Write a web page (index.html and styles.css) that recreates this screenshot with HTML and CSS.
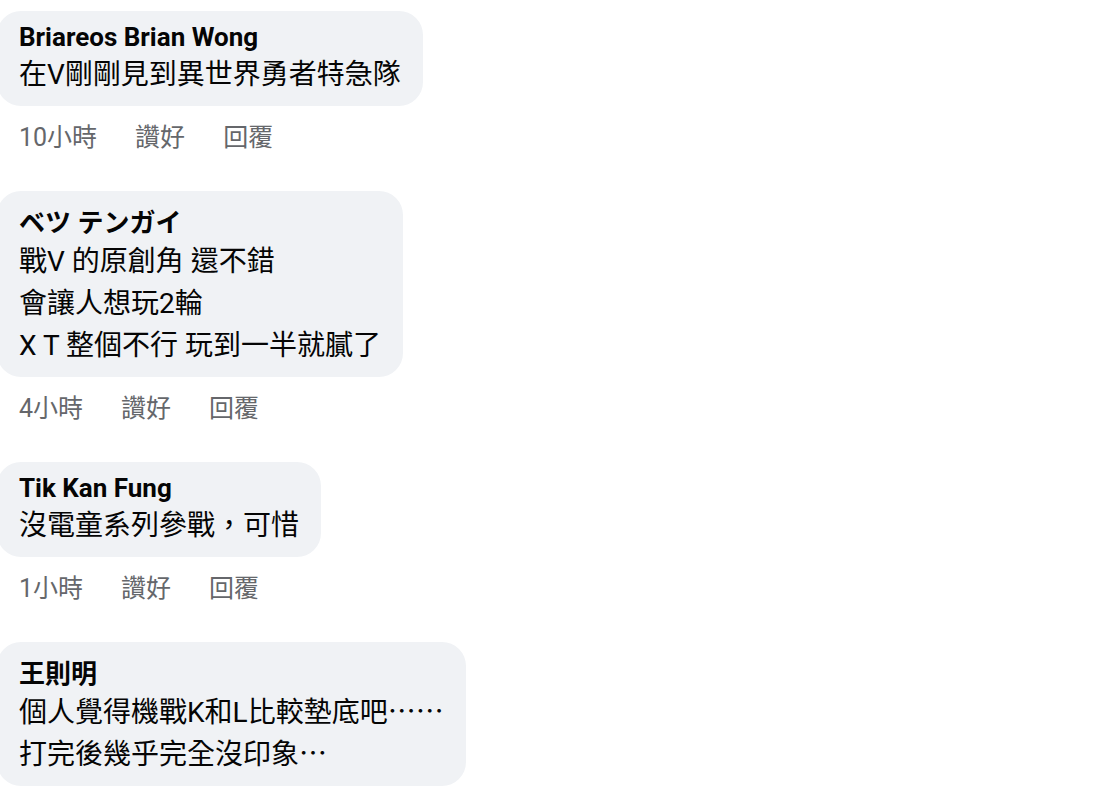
FILE: index.html
```html
<!DOCTYPE html>
<html lang="zh-Hant">

<head>
    <meta charset="UTF-8">
    <meta name="viewport" content="width=device-width, initial-scale=1.0">
    <title>留言</title>
    <link rel="stylesheet" href="styles.css">
</head>

<body>
    <div class="comments">
        <div class="comment">
            <div class="bubble">
                <div class="author">Briareos Brian Wong</div>
                <div class="text">在V剛剛見到異世界勇者特急隊</div>
            </div>
            <div class="actions">
                <span>10小時</span>
                <span>讚好</span>
                <span>回覆</span>
            </div>
        </div>

        <div class="comment">
            <div class="bubble">
                <div class="author">ベツ テンガイ</div>
                <div class="text">戰V 的原創角 還不錯</div>
                <div class="text">會讓人想玩2輪</div>
                <div class="text">X T 整個不行 玩到一半就膩了</div>
            </div>
            <div class="actions">
                <span>4小時</span>
                <span>讚好</span>
                <span>回覆</span>
            </div>
        </div>

        <div class="comment">
            <div class="bubble">
                <div class="author">Tik Kan Fung</div>
                <div class="text">沒電童系列參戰，可惜</div>
            </div>
            <div class="actions">
                <span>1小時</span>
                <span>讚好</span>
                <span>回覆</span>
            </div>
        </div>

        <div class="comment">
            <div class="bubble">
                <div class="author">王則明</div>
                <div class="text">個人覺得機戰K和L比較墊底吧<span class="cjk">……</span></div>
                <div class="text">打完後幾乎完全沒印象<span class="cjk">…</span></div>
            </div>
        </div>
    </div>
</body>

</html>
```

FILE: styles.css
```css
body {
    margin: 0;
    background-color: #fff;
    color: #050505;
    font-family: Roboto, "Noto Sans CJK TC", sans-serif;
}

.comments {
    display: flex;
    flex-direction: column;
    align-items: flex-start;
    padding-top: 11px;
}

.comment {
    display: flex;
    flex-direction: column;
    align-items: flex-start;
    margin-bottom: 37px;
}

.bubble {
    margin-left: -3px;
    padding: 11px 22px 10px 22px;
    background-color: #f0f2f5;
    border-radius: 24px;
}

.author {
    font-size: 26px;
    font-weight: 700;
    line-height: normal;
    margin-bottom: 2px;
}

.text {
    font-size: 28px;
    line-height: 42px;
    white-space: nowrap;
}

/* full-width dots, without growing the line */
.cjk {
    font-family: "Noto Sans CJK TC", sans-serif;
    line-height: 1;
}

.actions {
    display: flex;
    gap: 38px;
    margin-top: 16px;
    padding-left: 19px;
    font-size: 25px;
    line-height: 32px;
    color: #65676b;
}
```
